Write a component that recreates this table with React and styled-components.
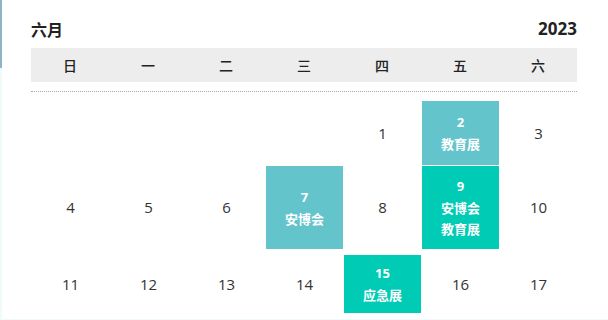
import React from "react";
import styled, { createGlobalStyle } from "styled-components";

const Global = createGlobalStyle`
  html, body {
    margin: 0;
    padding: 0;
    background: #effafa;
    font-family: "Noto Sans CJK SC", "Microsoft YaHei", sans-serif;
  }
`;

const Page = styled.div`
  display: flex;
  width: 608px;
  height: 320px;
  overflow: hidden;
`;

const Edge = styled.div`
  width: 2px;
  height: 68px;
  background: #8fb4c4;
  flex-shrink: 0;
`;

const Card = styled.div`
  flex: 1;
  height: 319px;
  background: #fff;
  padding: 0 31px 0 29px;
  box-sizing: border-box;
`;

const TitleBar = styled.div`
  display: flex;
  justify-content: space-between;
  align-items: center;
  height: 48px;
  padding-top: 9px;
  box-sizing: border-box;
  color: #222;
  font-size: 16px;
`;

const Month = styled.span`
  font-weight: 600;
`;

const Year = styled.span`
  font-weight: 700;
  font-family: "Open Sans", "Noto Sans CJK SC", sans-serif;
  font-size: 17px;
`;

const Weekdays = styled.div`
  display: grid;
  grid-template-columns: repeat(7, 1fr);
  height: 34px;
  background: #ededed;
  border-bottom: 9px solid #fff;
`;

const Weekday = styled.div`
  display: flex;
  align-items: center;
  justify-content: center;
  font-size: 14px;
  font-weight: 500;
  color: #222;
`;

const Divider = styled.div`
  border-top: 1px dotted #a8a8a8;
  margin-bottom: 9px;
`;

const Week = styled.div`
  display: grid;
  grid-template-columns: repeat(7, 1fr);
  height: ${p => p.$h}px;
  margin-top: ${p => p.$gap || 0}px;
`;

const Day = styled.div`
  display: flex;
  flex-direction: column;
  align-items: center;
  justify-content: center;
  margin-left: 1px;
  background: ${p => p.$bg || "transparent"};
  color: ${p => (p.$bg ? "#fff" : "#333")};
  font-size: ${p => (p.$bg ? "13px" : "15px")};
  font-weight: ${p => (p.$bg ? 700 : 400)};
  line-height: 21px;
`;

const Num = styled.span`
  font-family: "Open Sans", "Noto Sans CJK SC", sans-serif;
`;

const LIGHT = "#64c4cc";
const BRIGHT = "#00cbb5";

const weeks = [
  {
    h: 64,
    gap: 0,
    days: [null, null, null, null, { n: 1 }, { n: 2, bg: LIGHT, ev: ["教育展"] }, { n: 3 }],
  },
  {
    h: 83,
    gap: 1,
    days: [
      { n: 4 },
      { n: 5 },
      { n: 6 },
      { n: 7, bg: LIGHT, ev: ["安博会"] },
      { n: 8 },
      { n: 9, bg: BRIGHT, ev: ["安博会", "教育展"] },
      { n: 10 },
    ],
  },
  {
    h: 58,
    gap: 6,
    days: [
      { n: 11 },
      { n: 12 },
      { n: 13 },
      { n: 14 },
      { n: 15, bg: BRIGHT, ev: ["应急展"] },
      { n: 16 },
      { n: 17 },
    ],
  },
];

const names = ["日", "一", "二", "三", "四", "五", "六"];

export default function App() {
  return (
    <>
      <Global />
      <Page>
        <Edge />
        <Card>
          <TitleBar>
            <Month>六月</Month>
            <Year>2023</Year>
          </TitleBar>
          <Weekdays>
            {names.map(n => (
              <Weekday key={n}>{n}</Weekday>
            ))}
          </Weekdays>
          <Divider />
          {weeks.map((w, i) => (
            <Week key={i} $h={w.h} $gap={w.gap}>
              {w.days.map((d, j) =>
                d ? (
                  <Day key={j} $bg={d.bg}>
                    <Num>{d.n}</Num>
                    {d.ev && d.ev.map(e => <span key={e}>{e}</span>)}
                  </Day>
                ) : (
                  <Day key={j} />
                )
              )}
            </Week>
          ))}
        </Card>
      </Page>
    </>
  );
}
